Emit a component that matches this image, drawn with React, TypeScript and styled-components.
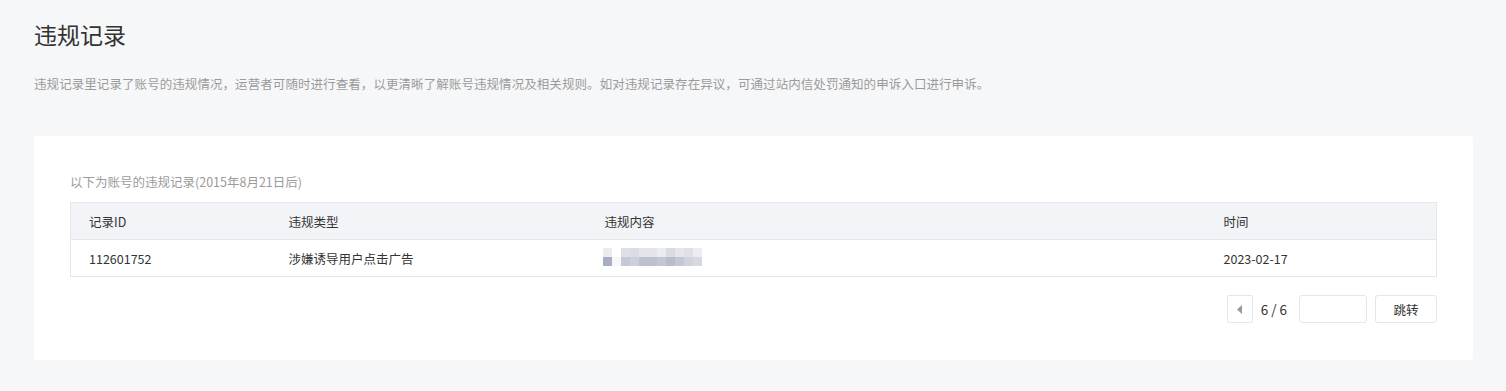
import styled, { createGlobalStyle } from 'styled-components'

const GlobalStyle = createGlobalStyle`
  html, body {
    margin: 0;
    padding: 0;
    background: #f6f7f9;
  }
  body {
    font-family: "Noto Sans CJK SC", "Noto Sans", sans-serif;
    color: #333;
  }
`

const records = [
  { id: '112601752', type: '涉嫌诱导用户点击广告', time: '2023-02-17' },
]

// mosaic colours of the blurred content, two rows of eleven blocks
const mosaic = [
  ['#e9ebf0', '#ffffff', '#dedfe8', '#dadce6', '#e4e5ea', '#e4e5ea', '#ebecf0', '#d9dbe4', '#e4e6eb', '#e0e1e7', '#ecedf1'],
  ['#a9adc2', '#f6f7fb', '#c6c8d4', '#cdd0dc', '#bec2d0', '#bec2d0', '#c4c7d2', '#b8bccb', '#c3c8d6', '#d0d2dc', '#d6d9e2'],
]

function Mosaic() {
  return (
    <MosaicSvg width={99} height={18} viewBox='0 0 99 18'>
      {mosaic.map((row, r) =>
        row.map((fill, c) => (
          <rect key={`${r}-${c}`} x={c * 9} y={r * 9} width={9} height={9} fill={fill} />
        ))
      )}
    </MosaicSvg>
  )
}

function PrevIcon() {
  return (
    <svg width='5' height='9' viewBox='0 0 5 9'>
      <path d='M5 0 L0 4.5 L5 9 Z' fill='#9a9a9a' />
    </svg>
  )
}

export default function App() {
  return (
    <Page>
      <GlobalStyle />
      <Title>违规记录</Title>
      <Description>
        违规记录里记录了账号的违规情况，运营者可随时进行查看，以更清晰了解账号违规情况及相关规则。如对违规记录存在异议，可通过站内信处罚通知的申诉入口进行申诉。
      </Description>
      <Card>
        <Caption>以下为账号的违规记录(2015年8月21日后)</Caption>
        <Table>
          <colgroup>
            <col style={{ width: 200 }} />
            <col style={{ width: 316 }} />
            <col style={{ width: 619 }} />
            <col />
          </colgroup>
          <thead>
            <tr>
              <Th>记录ID</Th>
              <Th>违规类型</Th>
              <Th>违规内容</Th>
              <Th>时间</Th>
            </tr>
          </thead>
          <tbody>
            {records.map(r => (
              <tr key={r.id}>
                <Td>{r.id}</Td>
                <Td>{r.type}</Td>
                <Td><Mosaic /></Td>
                <Td>{r.time}</Td>
              </tr>
            ))}
          </tbody>
        </Table>
        <Pager>
          <PrevButton type='button'>
            <PrevIcon />
          </PrevButton>
          <PageCount>6 / 6</PageCount>
          <PageInput type='text' />
          <JumpButton type='button'>跳转</JumpButton>
        </Pager>
      </Card>
    </Page>
  )
}

const Page = styled.div`
  display: flex;
  flex-direction: column;
  padding: 18px 33px 32px 34px;
`

const Title = styled.h1`
  margin: 0;
  font-size: 23px;
  font-weight: 400;
  line-height: 32px;
  color: #333;
`

const Description = styled.p`
  margin: 24px 0 0;
  font-size: 12.5px;
  line-height: 20px;
  letter-spacing: 0.07px;
  color: #9b9b9b;
`

const Card = styled.div`
  margin-top: 42px;
  background: #fff;
  border-radius: 3px;
  padding: 36px 36px 37px;
  display: flex;
  flex-direction: column;
`

const Caption = styled.div`
  font-size: 12.5px;
  line-height: 20px;
  color: #9b9b9b;
  margin-bottom: 10px;
`

const Table = styled.table`
  width: 100%;
  table-layout: fixed;
  border-collapse: collapse;
  border: 1px solid #e4e6eb;
`

const Th = styled.th`
  height: 36px;
  padding: 0 0 0 18px;
  background: #f3f4f7;
  border-bottom: 1px solid #e4e6eb;
  text-align: left;
  font-size: 12.5px;
  font-weight: 400;
  color: #333;
`

const Td = styled.td`
  height: 36px;
  padding: 0 0 0 18px;
  font-size: 12.5px;
  color: #333;
  vertical-align: middle;
`

const MosaicSvg = styled.svg`
  display: block;
  margin-left: -2px;
  margin-top: -2px;
`

const Pager = styled.div`
  display: flex;
  justify-content: flex-end;
  align-items: center;
  margin-top: 18px;
`

const PrevButton = styled.button`
  width: 26px;
  height: 28px;
  padding: 0;
  display: flex;
  align-items: center;
  justify-content: center;
  background: #fff;
  border: 1px solid #e4e6eb;
  border-radius: 2px;
`

const PageCount = styled.span`
  margin: 0 12px 0 8px;
  font-size: 13.5px;
  color: #333;
`

const PageInput = styled.input`
  box-sizing: border-box;
  width: 68px;
  height: 28px;
  border: 1px solid #e4e6eb;
  border-radius: 3px;
  outline: none;
`

const JumpButton = styled.button`
  box-sizing: border-box;
  margin-left: 8px;
  width: 62px;
  height: 28px;
  background: #fff;
  border: 1px solid #e4e6eb;
  border-radius: 3px;
  font-family: "Noto Sans CJK SC", sans-serif;
  font-size: 12.5px;
  color: #333;
`
